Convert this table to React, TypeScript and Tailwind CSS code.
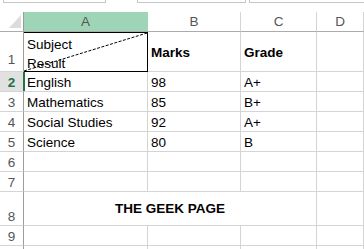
import React from "react";

const cols = ["A", "B", "C", "D"];

type Row = { n: number; h: string; cells: React.ReactNode[]; active?: boolean };

const rows: Row[] = [
  { n: 2, h: "h-[20px]", cells: ["English", "98", "A+", ""], active: true },
  { n: 3, h: "h-[20px]", cells: ["Mathematics", "85", "B+", ""] },
  { n: 4, h: "h-[20px]", cells: ["Social Studies", "92", "A+", ""] },
  { n: 5, h: "h-[20px]", cells: ["Science", "80", "B", ""] },
  { n: 6, h: "h-[20px]", cells: ["", "", "", ""] },
  { n: 7, h: "h-[20px]", cells: ["", "", "", ""] },
];

const RowHead = ({ n, h, active }: { n?: number; h: string; active?: boolean }) => (
  <div
    className={`${h} flex items-end justify-center leading-[16px] border-r border-r-[#9c9c9c] border-b border-b-[#d4d4d4] ${
      active ? "bg-[#e1e1e1] text-[#217346] font-bold" : "bg-white text-[#555]"
    }`}
  >
    {n}
  </div>
);

const Cell = ({ h, children }: { h: string; children?: React.ReactNode }) => (
  <div className={`${h} flex items-end leading-[17px] px-[3px] border-r border-b border-[#d4d4d4] whitespace-nowrap`}>
    {children}
  </div>
);

export default function App() {
  return (
    <div className="w-[364px] h-[249px] overflow-hidden bg-white text-[13.5px] text-black" style={{ fontFamily: '"Liberation Sans", Arial, sans-serif' }}>
      {/* name box / formula bar edges */}
      <div className="relative h-[12px]">
        <div className="absolute left-[3px] top-0 w-[103px] h-[3px] border-x border-b border-[#c6c6c6]" />
        <div className="absolute left-[137px] top-0 w-[109px] h-[3px] border-x border-b border-[#c6c6c6]" />
        <div className="absolute left-[249px] top-0 w-[120px] h-[3px] border-l border-b border-[#c6c6c6]" />
      </div>

      <div className="grid grid-cols-[24px_124px_93px_76px_1fr]">
        {/* column headers */}
        <div className="h-[20px] relative border-r border-r-[#9c9c9c] border-b border-b-[#ababab]">
          <svg className="absolute left-[9px] top-[3px]" width="12" height="13" viewBox="0 0 12 13">
            <polygon points="12,0 12,13 0,13" fill="#dcdcdc" />
          </svg>
        </div>
        {cols.map((c) => (
          <div
            key={c}
            className={`h-[20px] flex items-center justify-center pt-[2px] border-b border-b-[#ababab] text-[#555] ${
              c === "A" ? "bg-[#9fd5b7] border-r border-r-[#9fd5b7]" : "border-r border-r-[#d4d4d4]"
            }`}
          >
            {c}
          </div>
        ))}

        {/* row 1 */}
        <RowHead n={1} h="h-[40px] pb-[3px]" />
        <div className="h-[40px] relative flex flex-col justify-between px-[3px] pt-[2px] pb-[1px] border-t border-r border-b border-black leading-[19px]">
          <span>Subject</span>
          <span>Result</span>
          <svg className="absolute inset-0 w-full h-full" viewBox="0 0 123 38" preserveAspectRatio="none">
            <line x1="0" y1="38" x2="123" y2="0" stroke="#000" strokeWidth="1" strokeDasharray="3 1.5" />
          </svg>
        </div>
        <div className="h-[40px] flex items-center pt-[3px] px-[3px] border-r border-b border-[#d4d4d4] font-bold">Marks</div>
        <div className="h-[40px] flex items-center pt-[3px] px-[3px] border-r border-b border-[#d4d4d4] font-bold">Grade</div>
        <Cell h="h-[40px]" />

        {rows.map((r) => (
          <React.Fragment key={r.n}>
            <RowHead n={r.n} h={r.h} active={r.active} />
            {r.cells.map((v, i) => (
              <div
                key={i}
                className={`${r.h} relative flex items-end leading-[17px] px-[3px] border-r border-b border-[#d4d4d4] whitespace-nowrap`}
              >
                {r.active && i === 0 && <div className="absolute -left-[1px] top-0 bottom-0 w-[2px] bg-[#217346]" />}
                {v}
              </div>
            ))}
          </React.Fragment>
        ))}

        {/* row 8 merged */}
        <RowHead n={8} h="h-[34px]" />
        <div className="col-span-3 h-[34px] flex items-center justify-center pt-[2px] font-bold border-r border-b border-[#d4d4d4]">
          THE GEEK PAGE
        </div>
        <Cell h="h-[34px]" />

        {/* row 9 */}
        <RowHead n={9} h="h-[20px]" />
        <Cell h="h-[20px]" />
        <Cell h="h-[20px]" />
        <Cell h="h-[20px]" />
        <Cell h="h-[20px]" />

        {/* row 10, mostly below the fold */}
        <RowHead h="h-[20px]" />
        <Cell h="h-[20px]" />
        <Cell h="h-[20px]" />
        <Cell h="h-[20px]" />
        <Cell h="h-[20px]" />
      </div>
    </div>
  );
}
